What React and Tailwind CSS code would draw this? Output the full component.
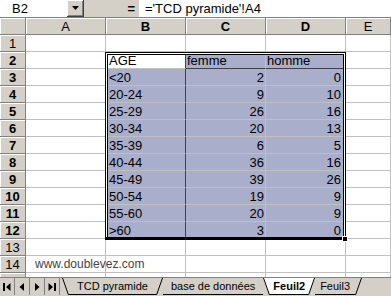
import React from "react";

const data = [
  ["AGE", "femme", "homme"],
  ["<20", "2", "0"],
  ["20-24", "9", "10"],
  ["25-29", "26", "16"],
  ["30-34", "20", "13"],
  ["35-39", "6", "5"],
  ["40-44", "36", "16"],
  ["45-49", "39", "26"],
  ["50-54", "19", "9"],
  ["55-60", "20", "9"],
  [">60", "3", "0"],
];

const font = { fontFamily: '"Liberation Sans", Arial, sans-serif' };

function Hdr({ children, bold }) {
  return (
    <div
      className={`h-[17px] bg-[#d4d0c8] border-r border-b border-[#808080] shadow-[inset_1px_1px_0_#ffffff] flex items-center justify-center text-[13px] leading-none text-black ${bold ? "font-bold" : ""}`}
    >
      {children}
    </div>
  );
}

function Cell({ children, sel, right, extra = "" }) {
  return (
    <div
      className={`h-[17px] border-r border-b border-[#c0c0c0] flex items-center px-[1px] text-[13px] leading-none text-black whitespace-nowrap ${sel ? "bg-[#a9aecb]" : "bg-white"} ${right ? "justify-end" : ""} ${extra}`}
    >
      {children}
    </div>
  );
}

function Slash({ dir, fill }) {
  // dir "back" = "\" (left edge), "fwd" = "/" (right edge)
  return (
    <svg width="7" height="17" viewBox="0 0 7 17" className="block shrink-0">
      {fill && (dir === "back" ? <path d="M0 0L7 17V0z" fill={fill} /> : <path d="M7 0L0 17V0z" fill={fill} />)}
      {dir === "back" ? (
        <path d="M0.5 0L6.5 17" stroke="#000" strokeWidth="1" />
      ) : (
        <path d="M6.5 0L0.5 17" stroke="#000" strokeWidth="1" />
      )}
    </svg>
  );
}

function Tab({ children, active }) {
  return (
    <div className={`h-[17px] flex items-center border-b border-black px-[2px] ${active ? "bg-white font-bold" : ""}`}>
      {children}
    </div>
  );
}

export default function App() {
  const rowsAll = [];
  for (let r = 1; r <= 15; r++) rowsAll.push(r);
  return (
    <div className="w-[391px] h-[296px] overflow-hidden bg-white relative select-none" style={font}>
      {/* formula bar */}
      <div className="h-[18px] flex bg-[#d4d0c8] border-b border-[#808080]">
        <div className="w-[67px] bg-white flex items-center pl-[12px] text-[13px] leading-none">B2</div>
        <div className="w-[17px] h-[17px] bg-[#d4d0c8] border-r border-b border-[#404040] shadow-[inset_1px_1px_0_#ffffff,inset_-1px_-1px_0_#808080] flex items-center justify-center">
          <svg width="7" height="4" viewBox="0 0 7 4"><path d="M0 0h7L3.5 4z" fill="#000" /></svg>
        </div>
        <div className="w-[55px] flex items-center justify-end pr-[4px] text-[13px] font-bold leading-none">=</div>
        <div className="flex-1 bg-white flex items-center pl-[6px] text-[13px] leading-none whitespace-nowrap">='TCD pyramide'!A4</div>
      </div>

      {/* grid */}
      <div className="grid grid-cols-[26px_80px_80px_80px_80px_1fr]">
        <Hdr />
        <Hdr>A</Hdr>
        <Hdr bold>B</Hdr>
        <Hdr bold>C</Hdr>
        <Hdr bold>D</Hdr>
        <Hdr>E</Hdr>
        {rowsAll.map((r) => {
          const inSel = r >= 2 && r <= 12;
          const d = inSel ? data[r - 2] : null;
          return (
            <React.Fragment key={r}>
              <Hdr bold={inSel}>{r}</Hdr>
              <Cell extra="overflow-visible">
                {r === 14 ? (
                  <span className="relative z-10 pl-[8px] text-[12px] text-[#444]">www.doublevez.com</span>
                ) : null}
              </Cell>
              <Cell sel={inSel && r !== 2} extra={inSel ? "border-r-[#404050] pl-[3px]" : ""}>
                {d ? d[0] : null}
              </Cell>
              <Cell sel={inSel} right={r !== 2} extra={r === 2 ? "border-b-[#404050]" : ""}>
                {d ? d[1] : null}
              </Cell>
              <Cell sel={inSel} right={r !== 2} extra={r === 2 ? "border-b-[#404050]" : "pr-[4px]"}>
                {d ? d[2] : null}
              </Cell>
              <Cell />
            </React.Fragment>
          );
        })}
      </div>

      {/* selection outline (double border, thick bottom) */}
      <div className="absolute left-[105px] top-[52px] w-[241px] h-[188px] border border-black border-b-[3px] pointer-events-none">
        <div className="absolute inset-0 border border-white border-b-0">
          <div className="absolute inset-0 border border-black border-b-0" />
        </div>
      </div>
      <div className="absolute left-[342px] top-[236px] w-[6px] h-[6px] bg-black border border-white" />

      {/* sheet tabs */}
      <div className="absolute left-0 right-0 bottom-0 h-[19px] bg-[#d4d0c8] border-t border-[#808080] flex items-start text-[11px] leading-none">
        <div className="flex h-[17px]">
          {["first", "prev", "next", "last"].map((k) => (
            <div key={k} className="w-[15px] h-[17px] flex items-center justify-center border-r border-[#808080]">
              <svg width="10" height="10" viewBox="0 0 10 10">
                {k === "first" && (<><rect x="1" y="1" width="2" height="8" fill="#000" /><path d="M8.5 1v8L4 5z" fill="#000" /></>)}
                {k === "prev" && <path d="M7 1v8L2.5 5z" fill="#000" />}
                {k === "next" && <path d="M3 1v8L7.5 5z" fill="#000" />}
                {k === "last" && (<><path d="M1.5 1v8L6 5z" fill="#000" /><rect x="7" y="1" width="2" height="8" fill="#000" /></>)}
              </svg>
            </div>
          ))}
        </div>
        <div className="flex items-start ml-[2px]">
          <Slash dir="back" />
          <Tab><span className="px-[6px]">TCD pyramide</span></Tab>
          <Slash dir="fwd" />
          <Tab><span className="px-[6px]">base de données</span></Tab>
          <Slash dir="back" fill="#ffffff" />
          <Tab active><span className="px-[1px]">Feuil2</span></Tab>
          <Slash dir="fwd" fill="#ffffff" />
          <Tab><span className="px-[3px]">Feuil3</span></Tab>
          <Slash dir="fwd" />
        </div>
      </div>
    </div>
  );
}
